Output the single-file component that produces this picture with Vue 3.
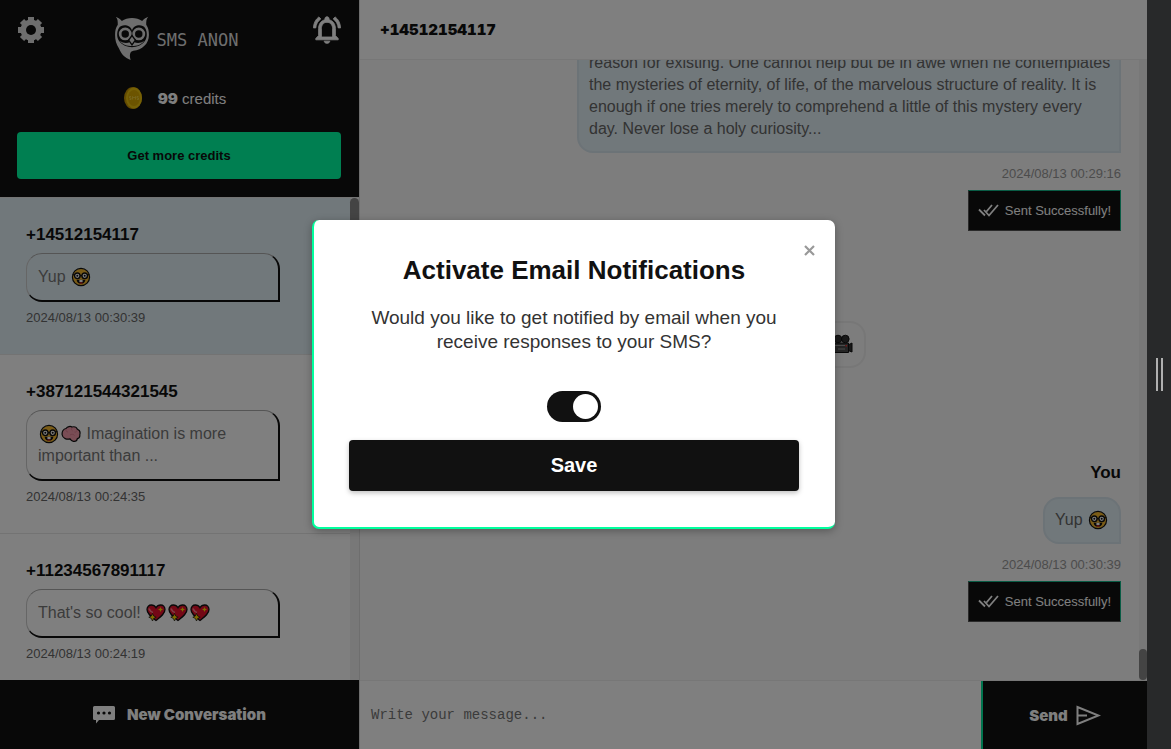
<script setup>
import { ref } from "vue";

const conversations = ref([
  {
    number: "+14512154117",
    before: "Yup ",
    emojis: ["nerd"],
    after: "",
    date: "2024/08/13 00:30:39",
  },
  {
    number: "+387121544321545",
    before: "",
    emojis: ["nerd", "brain"],
    after: " Imagination is more important than ...",
    date: "2024/08/13 00:24:35",
  },
  {
    number: "+11234567891117",
    before: "That's so cool! ",
    emojis: ["heart", "heart", "heart"],
    after: "",
    date: "2024/08/13 00:24:19",
  },
]);

const quote = [
  "reason for existing. One cannot help but be in awe when he contemplates",
  "the mysteries of eternity, of life, of the marvelous structure of reality. It is",
  "enough if one tries merely to comprehend a little of this mystery every",
  "day. Never lose a holy curiosity...",
].join("\n");

const activeIndex = ref(0);
const credits = ref(99);
const message = ref("");
const showModal = ref(true);
const notifyByEmail = ref(true);

function sendMessage() {
  message.value = "";
}

function saveSettings() {
  showModal.value = false;
}
</script>

<template>
  <!-- shared emoji drawings -->
  <svg class="sprite" aria-hidden="true">
    <symbol id="nerd" viewBox="0 0 20 20">
      <circle cx="10" cy="10" r="8.6" fill="#f5b82e" stroke="#111" stroke-width="1.2" />
      <path d="M1.6 7.5 4 8.2M18.4 7.5 16 8.2M9 8.6h2" stroke="#111" stroke-width="1.2" />
      <circle cx="6.3" cy="8.8" r="2.8" fill="#fff" stroke="#111" stroke-width="1.4" />
      <circle cx="13.7" cy="8.8" r="2.8" fill="#fff" stroke="#111" stroke-width="1.4" />
      <circle cx="6.3" cy="8.8" r="1" fill="#111" />
      <circle cx="13.7" cy="8.8" r="1" fill="#111" />
      <path d="M5.6 12.8h8.8c-.3 2.6-2 4-4.4 4s-4.1-1.4-4.4-4z" fill="#111" />
      <path d="M8.4 12.8h3.2v2.2H8.4z" fill="#fff" />
      <path d="M8 16c1-.9 3-.9 4 0-1 .9-3 .9-4 0z" fill="#e33" />
    </symbol>
    <symbol id="brain" viewBox="0 0 20 20">
      <path
        d="M1.2 11C.6 7.500 2.600 4.800 5 4.500 6.500 2.300 9.500 2 11 3c2.500-.6 4.800.6 5.400 2.300 2.200.8 3 3.200 2.400 5.400.2 2-.8 3.600-2.400 3.900-.4 2.100-2 3-4 2.700-1.800-.3-2.700-1.300-3.400-2.400-3 .9-7.200-.2-7.800-3.900z"
        fill="#f29aaa"
        stroke="#111"
        stroke-width="1.2"
      />
      <path
        d="M5 5.500c-.3 1.500.6 2.400 2 2.500M11 4c-.8 1-.5 2.300.5 2.800M9 11c1.500-1 3.500-1 4.500.5M16 6.500c-.6 1.500-1.600 1.800-2.500 1.500"
        fill="none"
        stroke="#d8778c"
        stroke-width=".8"
      />
    </symbol>
    <symbol id="heart" viewBox="0 0 20 20">
      <path
        d="M10 17.500C5 13.500 1 10.500 1 6.500 1 3.700 3 2 5.300 2 7.300 2 9 3 10 4.800 11 3 12.700 2 14.700 2 17 2 19 3.700 19 6.500c0 4-4 7-9 11z"
        fill="#e8112d"
        stroke="#111"
        stroke-width="1.3"
      />
      <path d="M3 5.500C4 7.500 4.500 9 7 9.500" fill="none" stroke="#ff7d8c" stroke-width="1.600" />
      <path
        d="M6.500 10.500 7.700 13l2.500 1.200-2.500 1.200-1.200 2.600-1.200-2.600-2.500-1.200L5.300 13z"
        fill="#ffd800"
        stroke="#111"
        stroke-width=".7"
      />
      <path d="m14.500 4 .8 1.700 1.700.8-1.700.8-.8 1.700-.8-1.700-1.700-.8 1.700-.8z" fill="#ffd800" />
    </symbol>
    <symbol id="camera" viewBox="0 0 20 20">
      <path d="M14 11.500 19 9v9l-5-2z" fill="#333" stroke="#111" />
      <path d="M1.500 9h14v9.500h-14z" fill="#4a4a4a" stroke="#111" />
      <circle cx="5" cy="5" r="3.800" fill="#333" stroke="#111" />
      <circle cx="12.300" cy="5" r="3.800" fill="#333" stroke="#111" />
      <path d="M2 11.500h10M5 15h7" stroke="#999" />
      <path d="M12.500 11h1.500v1.500h-1.500z" fill="#e33" />
    </symbol>
  </svg>

  <div class="screen">
    <div class="app">
      <aside class="sidebar">
        <header class="sidebar__header">
          <div class="topbar">
            <button class="icon-button" type="button" aria-label="Settings">
              <svg class="icon-gear" viewBox="0 0 28 28">
                <path
                  d="M14 1v26M1 14h26M5 5l18 18M23 5 5 23"
                  stroke="currentColor"
                  stroke-width="6"
                />
                <circle cx="14" cy="14" r="10.500" fill="currentColor" />
                <circle cx="14" cy="14" r="5" fill="#111" />
              </svg>
            </button>
            <a class="logo" href="#">
              <svg class="logo__owl" viewBox="0 0 100 130" aria-hidden="true">
                <path
                  fill="currentColor"
                  d="M2 2c5 3 13 5 18 13C36 3 64 3 80 15 85 7 93 5 98 2c-6 6-6 14-6 24 6 8 8 18 8 30 0 26-20 44-46 47-11 2-12 14-8 27-18-6-28-18-34-33C3 83 0 70 0 56 0 44 2 34 8 26 8 16 8 8 2 2z"
                />
                <path
                  fill="#111"
                  d="M50 43C46 26 20 22 11 36c-7 12-6 28 1 38 9 13 24 18 38 18s29-5 38-18c7-10 8-26 1-38C80 22 54 26 50 43z"
                />
                <path fill="currentColor" d="M14 74c10 7 22 7 30 3l6 10 6-10c8 4 20 4 30-3-8 11-22 15-36 15s-28-4-36-15z" />
                <circle cx="30" cy="53" r="15" fill="none" stroke="currentColor" stroke-width="8" />
                <circle cx="70" cy="53" r="15" fill="none" stroke="currentColor" stroke-width="8" />
                <path fill="currentColor" stroke="#111" stroke-width="4" d="m50 58 10 13-10 14-10-14z" />
              </svg>
              <span class="logo__name">SMS ANON</span>
            </a>
            <button class="icon-button" type="button" aria-label="Notifications">
              <svg class="icon-bell" viewBox="2 2 20 20">
                <path
                  fill="currentColor"
                  stroke="currentColor"
                  stroke-width=".6"
                  d="M12 21.500c1.100 0 2-.7 2-1.500h-4c0 .8.9 1.500 2 1.500zm6-5.500v-5c0-3.070-1.630-5.640-4.500-6.320V4c0-.83-.67-1.500-1.500-1.500s-1.500.67-1.500 1.500v.68C7.640 5.360 6 7.920 6 11v5l-2 2v1h16v-1l-2-2zm-2 1H8v-6c0-2.480 1.510-4.500 4-4.500s4 2.020 4 4.500v6zM7.580 4.080 6.150 2.650C3.750 4.480 2.400 7.300 2.300 10.500h1.700c.15-2.650 1.540-4.970 3.580-6.420zm12.390 6.420h1.730c-.15-3.200-1.460-6.020-3.850-7.850l-1.420 1.430c2.020 1.450 3.390 3.770 3.540 6.420z"
                />
              </svg>
            </button>
          </div>
          <div class="credits">
            <svg class="credits__coin" viewBox="0 0 18 22" aria-hidden="true">
              <ellipse cx="9" cy="11" rx="9" ry="11" fill="#c89600" />
              <ellipse cx="10" cy="11" rx="8" ry="10.400" fill="#ecc30c" />
              <ellipse cx="10" cy="11" rx="6" ry="8" fill="#d9a900" />
              <path d="M7 9.500H5.500v1.500H7v1.500H5.500M8.500 12.500v-3l1.500 1.500 1.500-1.500v3M14.500 9.500H13v1.500h1.500v1.500H13" fill="none" stroke="#f2d64a" stroke-width=".7" />
            </svg>
            <span><b class="credits__count">{{ credits }}</b> credits</span>
          </div>
          <button class="more-credits" type="button">Get more credits</button>
        </header>

        <div class="list">
          <ul class="list__items">
            <li
              v-for="(item, index) in conversations"
              :key="item.number"
              class="conversation"
              :class="{ 'conversation--active': index === activeIndex }"
              @click="activeIndex = index"
            >
              <h3 class="conversation__number">{{ item.number }}</h3>
              <p class="conversation__text">
                {{ item.before
                }}<svg v-for="(emoji, n) in item.emojis" :key="n" class="emoji">
                  <use :href="'#' + emoji" /></svg
                >{{ item.after }}
              </p>
              <time class="date">{{ item.date }}</time>
            </li>
          </ul>
          <div class="scrollbar"><div class="scrollbar__thumb"></div></div>
        </div>

        <button class="new-conversation" type="button">
          <svg class="icon-chat" viewBox="0 0 22 18" aria-hidden="true">
            <path
              fill="currentColor"
              d="M1.500 0h19A1.500 1.500 0 0 1 22 1.500v11a1.500 1.500 0 0 1-1.500 1.500H6l-3 3.500V14H1.500A1.500 1.500 0 0 1 0 12.500v-11A1.500 1.500 0 0 1 1.500 0z"
            />
            <circle cx="5.500" cy="7" r="1.600" fill="#111" />
            <circle cx="11" cy="7" r="1.600" fill="#111" />
            <circle cx="16.500" cy="7" r="1.600" fill="#111" />
          </svg>
          New Conversation
        </button>
      </aside>

      <main class="chat">
        <header class="chat__header">
          <h2 class="chat__number">+14512154117</h2>
        </header>

        <div class="chat__body">
          <div class="messages">
            <div class="message">
              <p class="bubble bubble--long">{{ quote }}</p>
              <time class="date date--light">2024/08/13 00:29:16</time>
              <div class="status">
                <svg class="status__icon" viewBox="0 0 21 13" aria-hidden="true">
                  <path d="m1 5.500 6 6M6 6l5 5.500L20 1M14 1 8.500 7.500" fill="none" stroke="currentColor" stroke-width="1.800" />
                </svg>
                Sent Successfully!
              </div>
            </div>

            <div class="message message--received">
              <p class="bubble bubble--received">
                <svg class="emoji"><use href="#camera" /></svg>
              </p>
            </div>

            <div class="message">
              <h3 class="message__author">You</h3>
              <p class="bubble">
                Yup <svg class="emoji"><use href="#nerd" /></svg>
              </p>
              <time class="date date--light">2024/08/13 00:30:39</time>
              <div class="status">
                <svg class="status__icon" viewBox="0 0 21 13" aria-hidden="true">
                  <path d="m1 5.500 6 6M6 6l5 5.500L20 1M14 1 8.500 7.500" fill="none" stroke="currentColor" stroke-width="1.800" />
                </svg>
                Sent Successfully!
              </div>
            </div>
          </div>
          <div class="scrollbar scrollbar--end"><div class="scrollbar__thumb"></div></div>
        </div>

        <form class="composer" @submit.prevent="sendMessage">
          <textarea
            v-model="message"
            class="composer__input"
            rows="1"
            aria-label="Message"
            placeholder="Write your message..."
          ></textarea>
          <button class="composer__send" type="submit">
            Send
            <svg class="icon-send" viewBox="0 0 25 21" aria-hidden="true">
              <path d="M1.500 2v17L22.500 10.500zM2 10.500h9" fill="none" stroke="currentColor" stroke-width="2" />
            </svg>
          </button>
        </form>
      </main>

      <div v-if="showModal" class="overlay">
        <form class="modal" role="dialog" aria-labelledby="modal-title" @submit.prevent="saveSettings">
          <button class="modal__close" type="button" aria-label="Close" @click="showModal = false">
            <svg class="icon-close" viewBox="0 0 11 11">
              <path d="m1 1 9 9M10 1l-9 9" stroke="currentColor" stroke-width="2.200" />
            </svg>
          </button>
          <h1 id="modal-title" class="modal__title">Activate Email Notifications</h1>
          <label class="modal__text" for="notify">
            Would you like to get notified by email when you receive responses to your SMS?
          </label>
          <input id="notify" v-model="notifyByEmail" class="toggle" type="checkbox" />
          <button class="modal__save" type="submit">Save</button>
        </form>
      </div>
    </div>

    <div class="resizer"><div class="resizer__handle"></div></div>
  </div>
</template>

<style>
body {
  margin: 0;
  overflow: hidden;
}
</style>

<style scoped>
* {
  box-sizing: border-box;
}

h1,
h2,
h3,
p,
ul {
  margin: 0;
  padding: 0;
}

button {
  border: none;
  padding: 0;
  font-family: inherit;
  cursor: pointer;
}

.sprite {
  position: absolute;
  width: 0;
  height: 0;
}

.screen {
  display: flex;
  height: 100vh;
  font-family: "Liberation Sans", Arial, sans-serif;
  color: #111;
}

.app {
  position: relative;
  flex: 1;
  display: flex;
  min-width: 0;
}

.sidebar {
  flex: 0 0 359px;
  display: flex;
  flex-direction: column;
  min-height: 0;
}

.sidebar__header {
  display: flex;
  flex-direction: column;
  padding: 16px 18px 18px 17px;
  background: #111;
  color: #fff;
}

.topbar {
  display: flex;
  justify-content: space-between;
  align-items: flex-start;
  height: 44px;
}

.icon-button {
  background: none;
  color: #fff;
}

.icon-gear,
.icon-bell {
  display: block;
  width: 28px;
  height: 28px;
}

.icon-gear {
  color: #ddd;
}

.logo {
  display: flex;
  align-items: center;
  gap: 8px;
  padding-right: 5px;
  color: #ddd;
  text-decoration: none;
}

.logo__owl {
  width: 34px;
  height: 44px;
}

.logo__name {
  padding-top: 4px;
  font-family: "DejaVu Sans Mono", monospace;
  font-size: 17px;
  line-height: 20px;
}

.credits {
  display: flex;
  justify-content: center;
  align-items: center;
  gap: 16px;
  height: 22px;
  margin: 27px 0 23px;
  padding-right: 8px;
  font-size: 15px;
}

.credits__coin {
  width: 18px;
  height: 22px;
}

.credits__count {
  font-family: Inter, sans-serif;
  font-weight: 900;
}

.more-credits {
  height: 47px;
  border-radius: 4px;
  background: #00ffa2;
  color: #111;
  font-size: 13px;
  font-weight: bold;
}

.list {
  flex: 1;
  display: flex;
  min-height: 0;
  border-top: 1px solid #e8e8e8;
  background: #fff;
}

.list__items {
  flex: 1;
  overflow: hidden;
  list-style: none;
}

.conversation {
  padding: 27px 70px 26px 26px;
  border-bottom: 1px solid #e6e6e6;
  cursor: pointer;
}

.conversation--active {
  background: #e3f0f6;
}

.conversation__number {
  font-size: 17px;
  line-height: 20px;
}

.conversation__text {
  margin: 8px 0 6px;
  padding: 12px 12px 12px 11px;
  border: solid #111;
  border-width: 1px 2px 2px 1px;
  border-top-color: #aaa;
  border-left-color: #ccc;
  border-radius: 16px 16px 0 16px;
  color: #777;
  font-size: 16px;
  line-height: 22px;
}

.date {
  display: block;
  color: #666;
  font-size: 13px;
  line-height: 20px;
}

.date--light {
  color: #999;
}

.emoji {
  width: 20px;
  height: 20px;
  margin: 0 1px;
  vertical-align: -5px;
}

.scrollbar {
  display: flex;
  flex: 0 0 9px;
  background: #f1f1f1;
}

.scrollbar--end {
  flex-basis: 8px;
  align-items: flex-end;
}

.scrollbar__thumb {
  width: 100%;
  height: 60%;
  border-radius: 5px;
  background: #888;
}

.scrollbar--end .scrollbar__thumb {
  height: 5%;
}

.new-conversation {
  display: flex;
  justify-content: center;
  align-items: center;
  gap: 12px;
  height: 69px;
  background: #111;
  color: #fff;
  font-family: Inter, sans-serif;
  font-size: 15px;
  font-weight: 900;
}

.icon-chat {
  width: 22px;
  height: 18px;
}

.chat {
  flex: 1;
  display: flex;
  flex-direction: column;
  min-width: 0;
  border-left: 1px solid #ddd;
  background: #fff;
}

.chat__header {
  display: flex;
  align-items: center;
  height: 60px;
  padding: 0 20px;
  border-bottom: 1px solid #eee;
}

.chat__number {
  font-family: Inter, sans-serif;
  font-size: 15px;
  font-weight: 900;
  font-variant-numeric: tabular-nums;
}

.chat__body {
  flex: 1;
  display: flex;
  min-height: 0;
  background: #fafafa;
}

.messages {
  flex: 1;
  display: flex;
  flex-direction: column;
  justify-content: flex-end;
  gap: 90px;
  padding: 0 18px 58px 20px;
  overflow: hidden;
}

.message {
  flex-shrink: 0;
  display: flex;
  flex-direction: column;
  align-items: flex-end;
}

.message--received {
  align-items: flex-start;
  margin-bottom: 4px;
}

.message__author {
  margin-bottom: 13px;
  font-size: 17px;
  line-height: 22px;
}

.bubble {
  max-width: 544px;
  margin-bottom: 11px;
  padding: 10px 10px 11px;
  border: 2px solid #d8e6ee;
  border-radius: 16px 16px 0 16px;
  background: #e3f0f6;
  color: #666;
  font-size: 16px;
  line-height: 22px;
}

.bubble--long {
  width: 544px;
  padding-right: 0;
  white-space: pre-line;
}

.bubble--received {
  width: 486px;
  margin-bottom: 0;
  border-color: #eee;
  border-radius: 16px 16px 16px 0;
  background: #fafafa;
  text-align: right;
}

.status {
  display: flex;
  align-items: center;
  gap: 6px;
  height: 41px;
  margin-top: 6px;
  padding: 0 9px;
  border: 1px solid #555;
  border-top-color: #13b98b;
  border-right-color: #13b98b;
  background: #111;
  color: #fff;
  font-size: 13px;
}

.status__icon {
  width: 21px;
  height: 13px;
}

.composer {
  display: flex;
  height: 69px;
  border-top: 1px solid #eee;
}

.composer__input {
  flex: 1;
  min-width: 0;
  padding: 24px 11px;
  border: none;
  outline: none;
  resize: none;
  background: #fff;
  font-family: "Liberation Mono", monospace;
  font-size: 14px;
  line-height: 20px;
}

.composer__input::placeholder {
  color: #777;
}

.composer__send {
  display: flex;
  justify-content: center;
  align-items: center;
  gap: 8px;
  width: 166px;
  border-left: 2px solid #00e69a;
  background: #111;
  color: #fff;
  font-family: Inter, sans-serif;
  font-size: 15px;
  font-weight: 900;
}

.icon-send {
  width: 25px;
  height: 21px;
}

.overlay {
  position: absolute;
  inset: 0;
  display: flex;
  justify-content: center;
  align-items: center;
  background: rgba(0, 0, 0, 0.5);
}

.modal {
  position: relative;
  display: flex;
  flex-direction: column;
  align-items: center;
  width: 523px;
  padding: 35px 36px 36px 35px;
  border-left: 2px solid #00ff9d;
  border-bottom: 2px solid #00ff9d;
  border-radius: 7px;
  background: #fff;
  box-shadow: 0 2px 8px rgba(0, 0, 0, 0.3);
}

.modal__close {
  position: absolute;
  top: 19px;
  right: 14px;
  padding: 6px;
  background: none;
  color: #999;
}

.icon-close {
  display: block;
  width: 11px;
  height: 11px;
}

.modal__title {
  font-size: 26px;
  line-height: 30px;
}

.modal__text {
  margin: 21px 0 37px;
  color: #333;
  font-size: 19px;
  line-height: 24px;
  text-align: center;
}

.toggle {
  appearance: none;
  display: flex;
  width: 54px;
  height: 31px;
  margin: 0 0 18px;
  padding: 3px;
  border-radius: 16px;
  background: #bbb;
  cursor: pointer;
}

.toggle::before {
  content: "";
  width: 25px;
  height: 25px;
  border-radius: 50%;
  background: #fff;
}

.toggle:checked {
  justify-content: flex-end;
  background: #111;
}

.modal__save {
  width: 100%;
  height: 51px;
  border-radius: 4px;
  background: #111;
  box-shadow: 0 2px 5px rgba(0, 0, 0, 0.25);
  color: #fff;
  font-size: 20px;
  font-weight: bold;
}

.resizer {
  flex: 0 0 24px;
  display: flex;
  justify-content: center;
  align-items: center;
  background: #28292a;
}

.resizer__handle {
  width: 7px;
  height: 33px;
  border: solid #b0b0b0;
  border-width: 0 2px;
}
</style>
